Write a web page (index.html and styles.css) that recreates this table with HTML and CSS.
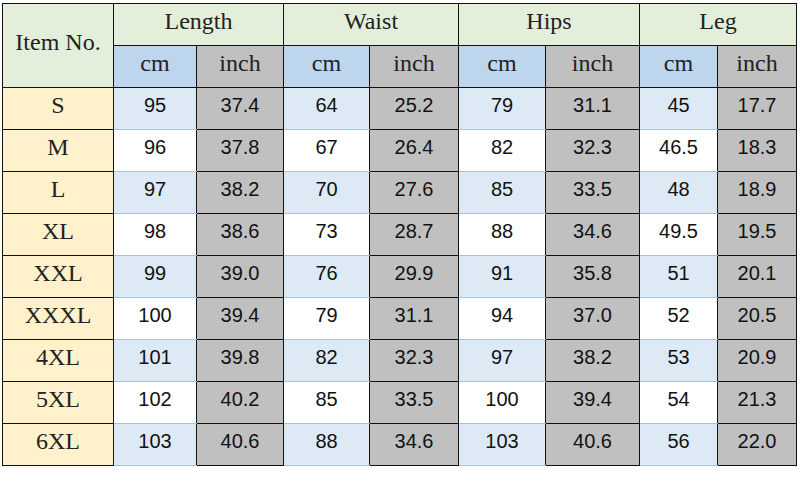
FILE: index.html
```html
<!DOCTYPE html>
<html lang="en">
<head>
<meta charset="utf-8">
<title>Size Chart</title>
<link rel="stylesheet" href="styles.css">
</head>
<body>
<table class="chart">
  <colgroup>
    <col class="c-item">
    <col class="c-len-cm"><col class="c-len-in">
    <col class="c-wai-cm"><col class="c-wai-in">
    <col class="c-hip-cm"><col class="c-hip-in">
    <col class="c-leg-cm"><col class="c-leg-in">
  </colgroup>
  <thead>
    <tr class="head-1">
      <th class="item-head" rowspan="2">Item No.</th>
      <th class="group" colspan="2">Length</th>
      <th class="group" colspan="2">Waist</th>
      <th class="group" colspan="2">Hips</th>
      <th class="group" colspan="2">Leg</th>
    </tr>
    <tr class="head-2">
      <th class="unit-cm">cm</th><th class="unit-in">inch</th>
      <th class="unit-cm">cm</th><th class="unit-in">inch</th>
      <th class="unit-cm">cm</th><th class="unit-in">inch</th>
      <th class="unit-cm">cm</th><th class="unit-in">inch</th>
    </tr>
  </thead>
  <tbody>
    <tr class="odd"><th class="size">S</th><td class="cm">95</td><td class="in">37.4</td><td class="cm">64</td><td class="in">25.2</td><td class="cm">79</td><td class="in">31.1</td><td class="cm">45</td><td class="in">17.7</td></tr>
    <tr class="even"><th class="size">M</th><td class="cm">96</td><td class="in">37.8</td><td class="cm">67</td><td class="in">26.4</td><td class="cm">82</td><td class="in">32.3</td><td class="cm">46.5</td><td class="in">18.3</td></tr>
    <tr class="odd"><th class="size">L</th><td class="cm">97</td><td class="in">38.2</td><td class="cm">70</td><td class="in">27.6</td><td class="cm">85</td><td class="in">33.5</td><td class="cm">48</td><td class="in">18.9</td></tr>
    <tr class="even"><th class="size">XL</th><td class="cm">98</td><td class="in">38.6</td><td class="cm">73</td><td class="in">28.7</td><td class="cm">88</td><td class="in">34.6</td><td class="cm">49.5</td><td class="in">19.5</td></tr>
    <tr class="odd"><th class="size">XXL</th><td class="cm">99</td><td class="in">39.0</td><td class="cm">76</td><td class="in">29.9</td><td class="cm">91</td><td class="in">35.8</td><td class="cm">51</td><td class="in">20.1</td></tr>
    <tr class="even"><th class="size">XXXL</th><td class="cm">100</td><td class="in">39.4</td><td class="cm">79</td><td class="in">31.1</td><td class="cm">94</td><td class="in">37.0</td><td class="cm">52</td><td class="in">20.5</td></tr>
    <tr class="odd"><th class="size">4XL</th><td class="cm">101</td><td class="in">39.8</td><td class="cm">82</td><td class="in">32.3</td><td class="cm">97</td><td class="in">38.2</td><td class="cm">53</td><td class="in">20.9</td></tr>
    <tr class="even"><th class="size">5XL</th><td class="cm">102</td><td class="in">40.2</td><td class="cm">85</td><td class="in">33.5</td><td class="cm">100</td><td class="in">39.4</td><td class="cm">54</td><td class="in">21.3</td></tr>
    <tr class="odd"><th class="size">6XL</th><td class="cm">103</td><td class="in">40.6</td><td class="cm">88</td><td class="in">34.6</td><td class="cm">103</td><td class="in">40.6</td><td class="cm">56</td><td class="in">22.0</td></tr>
  </tbody>
</table>
</body>
</html>
```

FILE: styles.css
```css
html, body {
  margin: 0;
  padding: 0;
  background: #ffffff;
}

body {
  padding: 3px 0 0 2px;
}

.chart {
  border-collapse: collapse;
  table-layout: fixed;
  width: 795px;
}

.c-item { width: 111px; }
.c-len-cm { width: 83px; }
.c-len-in { width: 87px; }
.c-wai-cm { width: 86px; }
.c-wai-in { width: 89px; }
.c-hip-cm { width: 87px; }
.c-hip-in { width: 94px; }
.c-leg-cm { width: 78px; }
.c-leg-in { width: 79px; }

.chart th,
.chart td {
  border: 1px solid #111111;
  padding: 0 0 7px 0;
  text-align: center;
  vertical-align: middle;
  white-space: nowrap;
}

.chart tr {
  height: 42px;
}

/* header */
.chart th {
  font-family: "Liberation Serif", "Times New Roman", serif;
  font-weight: normal;
  font-size: 24px;
  color: #222222;
}

.item-head,
.group {
  background: #e3eedb;
}

.unit-cm {
  background: #bdd6ee;
}

.unit-in {
  background: #c0c0c0;
}

/* body */
.size {
  background: #fff1cc;
}

.chart td {
  font-family: "Liberation Sans", Arial, sans-serif;
  font-size: 20px;
  color: #111111;
}

.chart td.cm {
  border-top-color: #a9c2da;
  border-bottom-color: #a9c2da;
}

.odd td.cm {
  background: #ddeaf6;
}

.even td.cm {
  background: #ffffff;
}

.chart td.in {
  background: #c0c0c0;
}
```
